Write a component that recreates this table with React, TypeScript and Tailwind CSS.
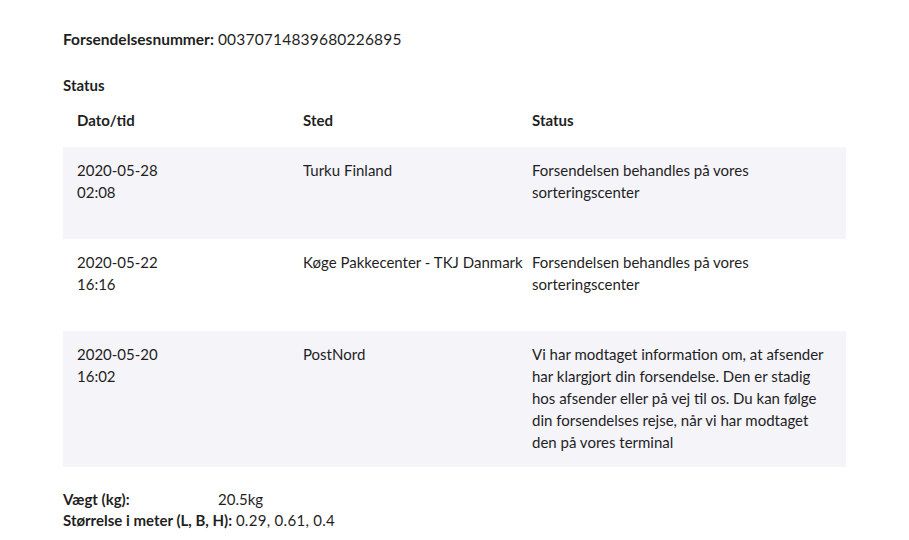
import React from "react";

const rows = [
  { date: "2020-05-28", time: "02:08", place: "Turku Finland", status: "Forsendelsen behandles på vores sorteringscenter", bg: true },
  { date: "2020-05-22", time: "16:16", place: "Køge Pakkecenter - TKJ Danmark", status: "Forsendelsen behandles på vores sorteringscenter", bg: false },
  {
    date: "2020-05-20",
    time: "16:02",
    place: "PostNord",
    status:
      "Vi har modtaget information om, at afsender har klargjort din forsendelse. Den er stadig hos afsender eller på vej til os. Du kan følge din forsendelses rejse, når vi har modtaget den på vores terminal",
    bg: true,
  },
];

export default function App() {
  return (
    <div
      className="w-[909px] h-[540px] bg-white text-[#1f1f1f] text-[15px] leading-[22px] pl-[63px] pt-[28px]"
      style={{ fontFamily: "Lato, 'Noto Sans', sans-serif" }}
    >
      <div className="text-[15.5px]">
        <span className="font-bold">Forsendelsesnummer:</span> <span className="tracking-[0.2px]">00370714839680226895</span>
      </div>
      <div className="font-bold mt-[24px]">Status</div>
      <div className="w-[783px] mt-[13px]">
        <div className="grid grid-cols-[226px_229px_1fr] font-bold h-[24px]">
          <div className="pl-[14px]">Dato/tid</div>
          <div className="pl-[14px]">Sted</div>
          <div className="pl-[14px]">Status</div>
        </div>
        <div className="mt-[14px]">
          {rows.map((r, i) => (
            <div
              key={i}
              className={`grid grid-cols-[226px_229px_1fr] min-h-[92px] pt-[12px] pb-[14px] ${r.bg ? "bg-[#f4f4f9]" : "bg-white"}`}
            >
              <div className="pl-[14px]">
                <div>{r.date}</div>
                <div>{r.time}</div>
              </div>
              <div className="pl-[14px] whitespace-nowrap">{r.place}</div>
              <div className="pl-[14px] pr-[14px]">{r.status}</div>
            </div>
          ))}
        </div>
      </div>
      <div className="mt-[22px] leading-[21px]">
        <div className="flex">
          <span className="font-bold w-[155px]">Vægt (kg):</span>
          <span>20.5kg</span>
        </div>
        <div>
          <span className="font-bold">Størrelse i meter (L, B, H):</span>{" "}
          <span className="tracking-[0.3px]">0.29, 0.61, 0.4</span>
        </div>
      </div>
    </div>
  );
}
